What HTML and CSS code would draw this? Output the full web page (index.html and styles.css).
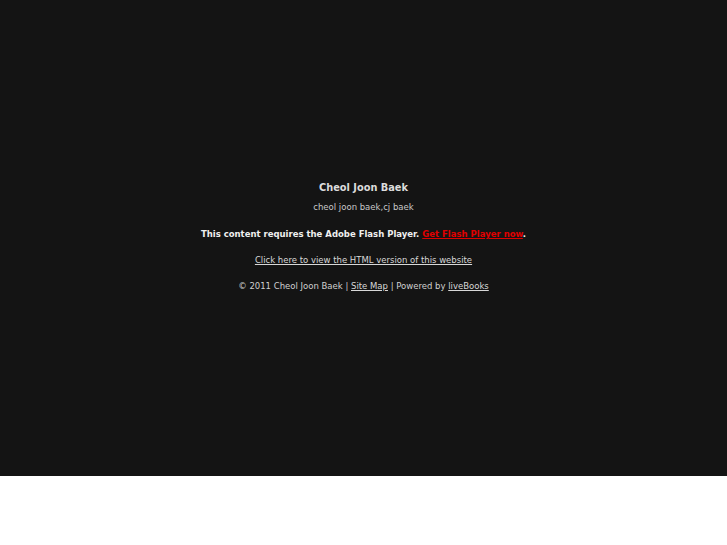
FILE: index.html
```html
<!DOCTYPE html>
<html>
<head>
<meta charset="utf-8">
<link rel="stylesheet" href="styles.css">
</head>
<body>
<div class="stage">
  <div class="content">
    <h1 class="title">Cheol Joon Baek</h1>
    <p class="sub">cheol joon baek,cj baek</p>
    <p class="flash">This content requires the Adobe Flash Player. <a class="red" href="#">Get Flash Player now</a>.</p>
    <p class="html"><a href="#">Click here to view the HTML version of this website</a></p>
    <p class="foot">© 2011 Cheol Joon Baek | <a href="#">Site Map</a> | Powered by <a href="#">liveBooks</a></p>
  </div>
</div>
</body>
</html>
```
FILE: styles.css
```css
html, body { margin: 0; padding: 0; background: #fff; }
body { font-family: "DejaVu Sans", sans-serif; }
.stage { background: #141414; height: 476px; display: flex; justify-content: center; }
.content { padding-top: 181px; text-align: center; color: #d8d8d8; }
.title { font-size: 9.8px; font-weight: bold; margin: 0; line-height: 14px; color: #dcdcdc; }
.sub { font-size: 8.5px; margin: 5px 0 0; line-height: 14px; color: #c8c8c8; }
.flash { font-size: 8.5px; font-weight: bold; margin: 13px 0 0; line-height: 14px; color: #f0f0f0; }
.html { font-size: 8.5px; margin: 12px 0 0; line-height: 14px; }
.foot { font-size: 8.5px; margin: 12px 0 0; line-height: 14px; color: #d0d0d0; }
a { color: #d8d8d8; text-decoration: underline; }
a.red { color: #e00000; }
```
